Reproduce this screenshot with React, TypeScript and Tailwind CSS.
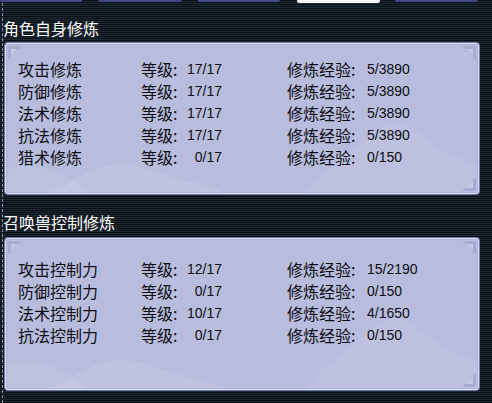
import React from "react";

const FONT = { fontFamily: '"Noto Sans CJK SC", "Liberation Sans", sans-serif' };
const NUM = { fontFamily: '"Liberation Sans", Arial, sans-serif' };

type Row = { name: string; lv: string; exp: string };

const self: Row[] = [
  { name: "攻击修炼", lv: "17/17", exp: "5/3890" },
  { name: "防御修炼", lv: "17/17", exp: "5/3890" },
  { name: "法术修炼", lv: "17/17", exp: "5/3890" },
  { name: "抗法修炼", lv: "17/17", exp: "5/3890" },
  { name: "猎术修炼", lv: "0/17", exp: "0/150" },
];

const pet: Row[] = [
  { name: "攻击控制力", lv: "12/17", exp: "15/2190" },
  { name: "防御控制力", lv: "0/17", exp: "0/150" },
  { name: "法术控制力", lv: "10/17", exp: "4/1650" },
  { name: "抗法控制力", lv: "0/17", exp: "0/150" },
];

function Corner({ className }: { className: string }) {
  return (
    <svg className={"absolute w-[14px] h-[14px] " + className} viewBox="0 0 14 14">
      <path d="M0 0 L14 0 L11 3 L3 3 L3 11 L0 14 Z" fill="#a3a9cf" opacity="0.8" />
      <path d="M3 3 L9 3 L3 9 Z" fill="#c9cdea" opacity="0.7" />
    </svg>
  );
}

function Mist() {
  return (
    <svg className="absolute inset-0 w-full h-full pointer-events-none" viewBox="0 0 474 152" preserveAspectRatio="none">
      <path d="M320 130 C345 110 365 90 385 80 C400 75 420 95 440 110 L474 125 L474 152 L300 152 Z" fill="#ffffff" opacity="0.07" />
      <path d="M60 145 C80 128 110 118 130 124 C150 130 170 138 200 144 L220 152 L40 152 Z" fill="#ffffff" opacity="0.10" />
      <path d="M0 128 C30 120 50 130 70 140 L80 152 L0 152 Z" fill="#ffffff" opacity="0.08" />
    </svg>
  );
}

function Panel({ rows, pt, h }: { rows: Row[]; pt: string; h: string }) {
  return (
    <div
      className={
        "relative ml-[2px] w-[474px] rounded-[3px] border border-[#dde0f4] bg-[#b8bddd] shadow-[0_0_0_1px_#6f78aa,inset_0_0_0_1px_#a9aed4] " +
        pt +
        " " +
        h
      }
    >
      <Mist />
      <Corner className="left-[2px] top-[2px]" />
      <Corner className="right-[2px] top-[2px] -scale-x-100" />
      <Corner className="right-[2px] bottom-[2px] -scale-x-100 -scale-y-100" />
      <div className="relative flex flex-col">
        {rows.map((r) => (
          <div key={r.name} className="flex items-center h-[22px] text-[16px] leading-[22px] text-[#0c0e14]">
            <span className="w-[135px] pl-[12px]">{r.name}</span>
            <span className="w-[40px]">等级:</span>
            <span className="w-[41px] text-right text-[14px]" style={NUM}>
              {r.lv}
            </span>
            <span className="w-[65px]" />
            <span className="w-[80px]">修炼经验:</span>
            <span className="text-[14px]" style={NUM}>
              {r.exp}
            </span>
          </div>
        ))}
      </div>
    </div>
  );
}

export default function App() {
  return (
    <div
      className="w-[492px] h-[403px] overflow-hidden bg-[repeating-linear-gradient(to_bottom,#080e13_0px,#080e13_1px,#1e2c38_1px,#1e2c38_2px)]"
      style={FONT}
    >
      <div className="flex h-[3px]">
        <div className="w-[82px] h-[2px] rounded-b-[2px] bg-[#414c86]" />
        <div className="ml-[16px] w-[84px] h-[2px] rounded-b-[2px] bg-[#414c86]" />
        <div className="ml-[16px] w-[82px] h-[2px] rounded-b-[2px] bg-[#414c86]" />
        <div className="ml-[17px] w-[83px] h-[3px] rounded-b-[2px] bg-[#f4f5fa]" />
        <div className="ml-[15px] w-[83px] h-[2px] rounded-b-[2px] bg-[#414c86]" />
      </div>
      <div className="ml-[2px] border-l border-dashed border-[#8c93a8] h-[400px]">
        <div className="pt-[14px] h-[40px] text-[16px] leading-[22px] text-white">角色自身修炼</div>
        <Panel rows={self} pt="pt-[14px]" h="h-[151px]" />
        <div className="pt-[17px] h-[44px] text-[16px] leading-[22px] text-white">召唤兽控制修炼</div>
        <Panel rows={pet} pt="pt-[19px]" h="h-[152px]" />
      </div>
    </div>
  );
}
